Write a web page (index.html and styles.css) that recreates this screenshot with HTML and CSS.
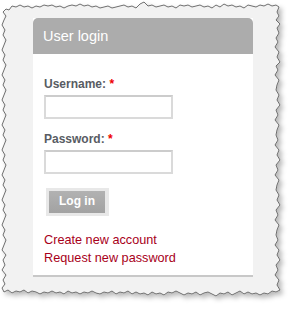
FILE: index.html
```html
<!DOCTYPE html>
<html>
<head>
<meta charset="utf-8">
<link rel="stylesheet" href="styles.css">
</head>
<body>
<div class="page">
  <svg class="paper" width="293" height="309" viewBox="0 0 293 309" aria-hidden="true">
    <defs>
      <filter id="sh" x="-5%" y="-5%" width="115%" height="115%">
        <feDropShadow dx="3" dy="3" stdDeviation="2.5" flood-color="#000" flood-opacity="0.28"/>
      </filter>
    </defs>
    <polygon filter="url(#sh)" fill="#f2f2f2" stroke="#6e6e6e" stroke-width="1" stroke-linejoin="miter"
      points="3,12 6,9 9,10 12,6 16,7 20,5 24,7 28,6 32,8 36,6 40,7 44,5 48,6 52,5 56,7 60,6 64,8 68,6 72,5 76,6 80,4 84,6 88,5 92,7 96,6 100,8 104,7 108,6 112,8 116,7 120,6 124,5 128,7 132,6 136,8 140,4 144,2 148,6 152,5 156,7 160,6 164,5 168,7 172,6 176,8 180,5 184,6 188,5 192,7 196,6 200,5 204,7 208,6 212,8 216,5 220,7 224,4 228,6 232,5 236,7 240,6 244,8 248,5 252,6 256,7 260,5 264,6 268,4 272,6 276,5 279,7 277,12 279,16 276,20 280,24 277,28 279,33 276,38 278,42 275,47 279,52 277,57 280,62 276,66 278,70 275,75 279,80 277,85 276,90 279,95 277,100 280,105 276,110 278,115 275,120 279,125 277,130 276,135 278,140 275,145 279,150 277,155 280,160 276,165 278,170 275,175 279,180 277,185 276,190 279,195 277,200 280,205 276,210 278,215 275,220 279,225 277,230 276,235 278,240 275,245 279,250 277,255 280,260 276,265 278,270 275,275 279,280 277,285 280,290 276,292 272,291 268,294 264,293 260,295 256,293 252,294 248,292 244,294 240,291 236,293 232,295 228,292 224,294 220,293 216,296 212,294 208,292 204,293 200,295 196,292 192,294 188,293 184,295 180,293 176,291 172,293 168,292 164,295 160,293 156,294 152,292 148,295 144,293 140,294 136,292 132,294 128,291 124,293 120,292 116,294 112,291 108,293 104,292 100,294 96,293 92,291 88,293 84,292 80,294 76,292 72,293 68,291 64,294 60,292 56,293 52,291 48,293 44,292 40,294 36,292 32,291 28,293 24,290 20,292 16,291 12,293 8,290 4,292 2,288 5,284 3,280 6,275 2,270 5,265 3,260 6,255 2,250 4,245 6,240 3,235 5,230 2,225 4,220 6,215 3,210 5,205 2,200 4,195 6,190 3,185 5,180 2,175 4,170 6,165 3,160 5,155 2,150 4,145 6,140 3,135 5,130 2,125 4,120 6,115 3,110 5,105 2,100 4,95 6,90 3,85 5,80 2,75 4,70 6,65 3,60 5,55 2,50 4,45 6,40 3,35 5,30 2,25 4,20 6,16"/>
  </svg>

  <div class="block">
    <h2 class="block-title">User login</h2>
    <div class="block-body">
      <div class="field">
        <label class="label">Username: <span class="req">*</span></label>
        <div class="input"></div>
      </div>
      <div class="field field-pass">
        <label class="label">Password: <span class="req">*</span></label>
        <div class="input"></div>
      </div>
      <div class="actions">
        <span class="btn-wrap"><span class="btn">Log in</span></span>
      </div>
      <ul class="links">
        <li><a class="link">Create new account</a></li>
        <li><a class="link">Request new password</a></li>
      </ul>
    </div>
  </div>
</div>
</body>
</html>
```
FILE: styles.css
```css
html, body {
  margin: 0;
  padding: 0;
  background: #ffffff;
}
.page {
  position: relative;
  width: 293px;
  height: 309px;
  overflow: hidden;
  font-family: "Liberation Sans", Arial, sans-serif;
}
.paper {
  position: absolute;
  left: 0;
  top: 0;
}
.block {
  position: relative;
  margin: 18px 0 0 33px;
  width: 220px;
  background: #ffffff;
  border-bottom: 2px solid #c8c8c8;
}
.block-title {
  margin: 0;
  height: 36px;
  line-height: 36px;
  padding-left: 10px;
  background: #acacac;
  border-radius: 5px 5px 0 0;
  color: #ffffff;
  font-size: 14.5px;
  font-weight: normal;
}
.block-body {
  padding: 23px 0 8px 11px;
}
.label {
  display: block;
  font-size: 12px;
  line-height: 15px;
  font-weight: bold;
  color: #585c63;
  margin-bottom: 3px;
}
.req {
  color: #ee0000;
}
.input {
  width: 125px;
  height: 20px;
  border: 2px solid #dadada;
  border-top-color: #cccccc;
  background: #ffffff;
}
.field-pass {
  margin-top: 13px;
}
.actions {
  margin-top: 14px;
  margin-left: 2px;
  display: flex;
}
.btn-wrap {
  display: block;
  padding: 3px 4px 3px 3px;
  background: #e8e8e8;
}
.btn {
  display: block;
  width: 56px;
  height: 22px;
  line-height: 21px;
  text-align: center;
  background: linear-gradient(#b2b2b2, #a2a2a2);
  color: #ffffff;
  font-size: 12px;
  font-weight: bold;
}
.links {
  list-style: none;
  margin: 15px 0 0 0;
  padding: 0;
}
.links li {
  line-height: 18px;
  font-size: 12.7px;
}
.link {
  color: #a8001a;
  text-decoration: none;
}
```
